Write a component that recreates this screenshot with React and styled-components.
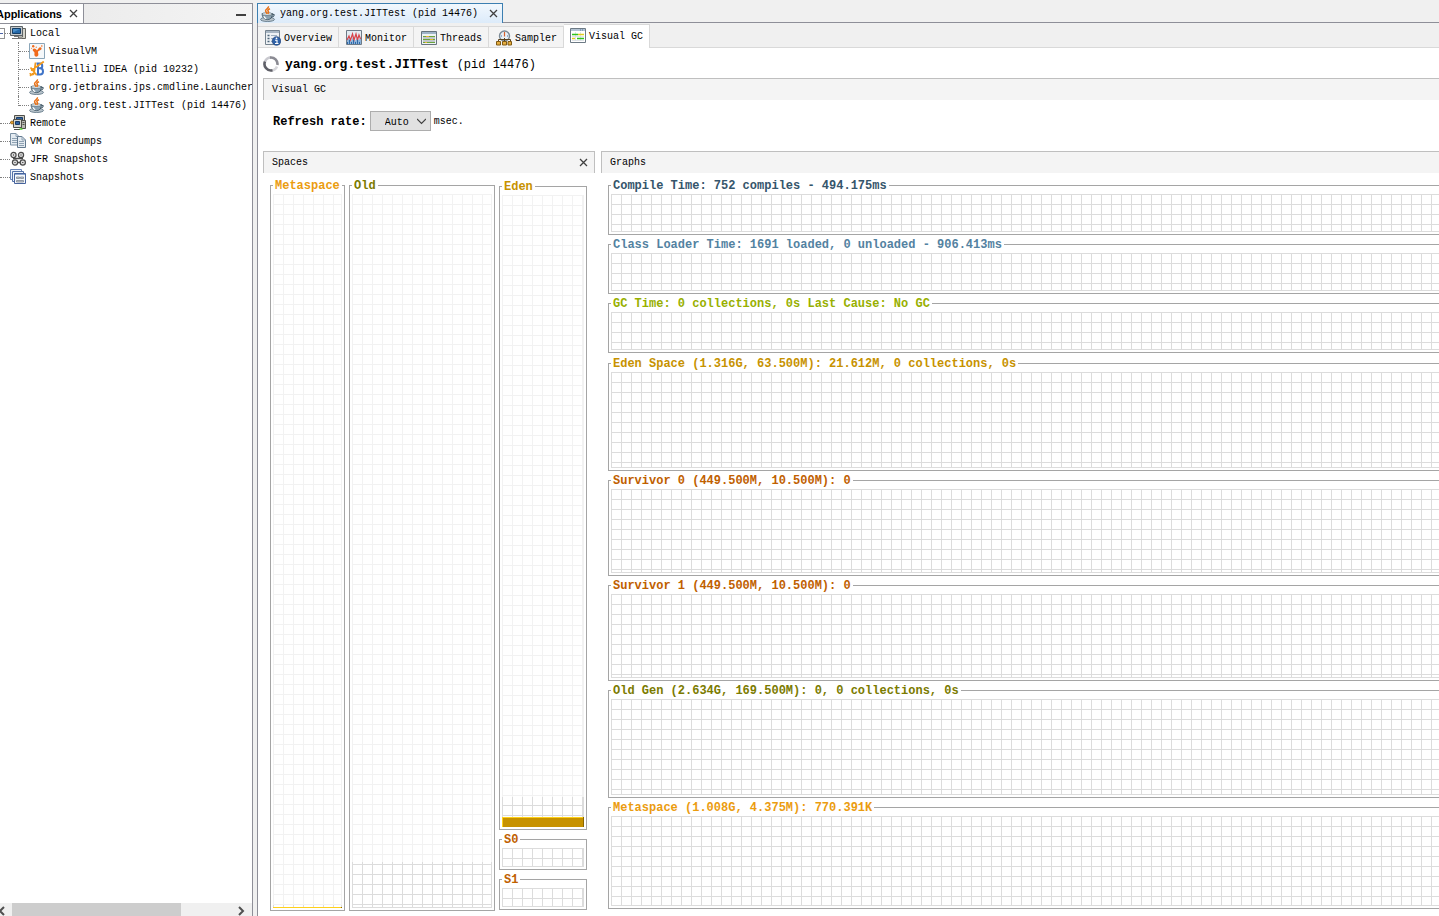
import React, { useState } from "react";
import styled, { createGlobalStyle, ThemeProvider } from "styled-components";

const theme = {
  chrome: "#f0f0f0",
  header: "#f4f4f4",
  edge: "#8e8f98",
  rule: "#bfbfbf",
  soft: "#d9d9d9",
  frame: "#a5a5a5",
  grid: "#dcdcdc",
};

const GlobalStyle = createGlobalStyle`
  * {
    box-sizing: border-box;
  }

  body {
    margin: 0;
    overflow: hidden;
    background: #f0f0f0;
    color: #000;
    font: 10px/18px "Liberation Mono", "Courier New", monospace;
  }

  button,
  select {
    margin: 0;
    padding: 0;
    border: 0;
    background: none;
    color: inherit;
    font: inherit;
  }

  svg {
    display: block;
    flex: none;
  }
`;

const Window = styled.div`
  display: flex;
  gap: 4px;
  height: 100vh;
  min-height: 600px;
  padding-top: 3px;
  background: ${(props) => props.theme.chrome};
`;

const Sidebar = styled.aside`
  display: flex;
  flex-direction: column;
  flex: none;
  width: 253px;
  overflow: hidden;
  background: #fff;
  border-top: 1px solid ${(props) => props.theme.edge};
  border-right: 1px solid ${(props) => props.theme.edge};
`;

const SidebarHeader = styled.header`
  display: flex;
  justify-content: space-between;
  height: 20px;
  background: linear-gradient(to right, #e8e8e8, #f4f4f4);
  border-bottom: 1px solid ${(props) => props.theme.edge};
`;

const SidebarTab = styled.div`
  display: flex;
  align-items: center;
  justify-content: flex-end;
  gap: 6px;
  width: 84px;
  padding-right: 4px;
  overflow: hidden;
  background: #fff;
  border-right: 1px solid ${(props) => props.theme.edge};
  font: bold 11px/18px "Liberation Sans", Arial, sans-serif;
`;

const IconButton = styled.button`
  display: flex;
  align-items: center;
  justify-content: center;
  width: ${(props) => props.$width || 11}px;
  flex: none;
`;

const Label = styled.span`
  padding-top: 2px;
`;

const Tree = styled.ul`
  flex: 1;
  margin: 0;
  padding: 0;
  list-style: none;
  white-space: nowrap;
  overflow: hidden;
`;

const Branch = styled.ul`
  margin: 0 0 0 18px;
  padding: 0;
  list-style: none;
`;

const Leaf = styled.li`
  /* dotted trunk, which stops half way down the last row */
  &::before {
    content: "";
    float: left;
    height: ${(props) => (props.$last ? 10 : 18)}px;
    border-left: 1px dotted #808080;
  }
`;

const Node = styled.div`
  display: flex;
  align-items: center;
  gap: 4px;
  height: 18px;
`;

const Twig = styled.span`
  flex: none;
  width: ${(props) => props.$width}px;
  margin-right: -4px;
  border-top: 1px dotted #808080;
`;

const Expander = styled.button`
  width: 5px;
  height: 11px;
  margin-right: -4px;
  background: linear-gradient(#4b63a7, #4b63a7) 0 4px / 3px 1px no-repeat #fff;
  border: 1px solid #919191;
  border-left: 0;
`;

const ScrollBar = styled.div`
  display: flex;
  align-items: center;
  height: 13px;
  background: ${(props) => props.theme.chrome};
`;

const Thumb = styled.div`
  width: 169px;
  height: 100%;
  margin-right: auto;
  background: #cdcdcd;
`;

const Main = styled.main`
  display: flex;
  flex-direction: column;
  flex: 1;
  min-width: 0;
`;

const DocumentTabs = styled.div`
  display: flex;
  height: 20px;

  &::after {
    content: "";
    flex: 1;
    border-bottom: 1px solid ${(props) => props.theme.edge};
  }
`;

const DocumentTab = styled.div`
  display: flex;
  align-items: center;
  gap: 4px;
  width: 246px;
  padding: 0 3px 0 2px;
  background: linear-gradient(#f2f8fd, #dcebfa);
  border: 1px solid #3c7fb1;
  border-bottom: 0;

  button {
    margin-left: auto;
  }
`;

const Document = styled.section`
  display: flex;
  flex-direction: column;
  flex: 1;
  min-height: 0;
  background: #fff;
  border-left: 1px solid ${(props) => props.theme.edge};
`;

const ViewTabs = styled.div`
  display: flex;
  align-items: flex-end;
  height: 25px;
  padding-top: 1px;
  background: ${(props) => props.theme.chrome};

  &::after {
    content: "";
    flex: 1;
    border-bottom: 1px solid ${(props) => props.theme.soft};
  }
`;

const ViewTab = styled.button`
  display: flex;
  align-items: center;
  gap: 3px;
  height: ${(props) => (props.$active ? 24 : 22)}px;
  padding: ${(props) => (props.$active ? "0 6px 1px" : "2px 6px 0 7px")};
  background: ${(props) => (props.$active ? "#fff" : props.theme.header)};
  border: 0 solid ${(props) => props.theme.soft};
  border-width: ${(props) => (props.$active ? "1px 1px 0 0" : "1px 1px 1px 0")};
`;

const Title = styled.h1`
  display: flex;
  align-items: center;
  gap: 6px;
  height: 30px;
  margin: 0;
  padding: 2px 0 0 5px;
  font-size: 13px;

  small {
    font-weight: normal;
    font-size: 12px;
  }
`;

const PanelHeader = styled.h2`
  display: flex;
  align-items: center;
  justify-content: space-between;
  height: 22px;
  margin: 0;
  padding: 0 5px 0 8px;
  background: ${(props) => props.theme.header};
  border: 1px solid ${(props) => props.theme.rule};
  border-bottom: 0;
  border-right-width: ${(props) => (props.$open ? 0 : 1)}px;
  font-size: 10px;
  font-weight: normal;
`;

const Body = styled.div`
  display: flex;
  flex-direction: column;
  flex: 1;
  min-height: 0;
  padding: 0 0 5px 5px;
`;

const Options = styled.form`
  display: flex;
  align-items: center;
  gap: 3px;
  height: 51px;
  padding: 0 0 9px 10px;
`;

const OptionLabel = styled.label`
  padding-top: 2px;
  font-size: 12px;
  font-weight: bold;
`;

const SelectBox = styled.div`
  display: grid;
  align-items: center;
  width: 61px;
  height: 20px;
  background: #e1e1e1;
  border: 1px solid #adadad;

  select,
  svg {
    grid-area: 1 / 1;
  }

  select {
    height: 18px;
    padding: 2px 0 0 14px;
    appearance: none;
  }

  svg {
    justify-self: end;
    margin-right: 4px;
    pointer-events: none;
  }
`;

const Panels = styled.div`
  display: flex;
  gap: 6px;
  flex: 1;
  min-height: 0;
`;

const Panel = styled.section`
  display: flex;
  flex-direction: column;
  flex: ${(props) => (props.$width ? "none" : 1)};
  width: ${(props) => (props.$width ? `${props.$width}px` : "auto")};
  min-width: 0;
`;

const Spaces = styled.div`
  display: grid;
  grid-template-columns: 75fr 146fr 88fr;
  gap: 4px;
  flex: 1;
  min-height: 0;
  padding: 6px 8px 0 7px;
`;

const YoungGen = styled.div`
  display: flex;
  flex-direction: column;
  gap: 3px;
  padding: 1px 0;
`;

const Graphs = styled.div`
  display: flex;
  flex-direction: column;
  gap: 4px;
  flex: 1;
  min-height: 0;
  padding: 6px 0 2px 7px;
`;

const GraphGroup = styled.div`
  display: flex;
  flex-direction: column;
  gap: 3px;
  flex: ${(props) => (props.$fill ? "1 1 0" : "none")};
  min-height: 0;
`;

const Frame = styled.fieldset`
  display: flex;
  flex-direction: column;
  flex: ${(props) => (props.$grow ? `${props.$grow} 1 0` : "none")};
  height: ${(props) => (props.$height ? `${props.$height}px` : "auto")};
  min-width: 0;
  min-height: 0;
  margin: 0;
  padding: 2px ${(props) => (props.$open ? 0 : 2)}px 2px 2px;
  border: 1px solid ${(props) => props.theme.frame};
  border-right-width: ${(props) => (props.$open ? 0 : 1)}px;
`;

const Legend = styled.legend`
  padding: 2px 2px 0;
  color: ${(props) => props.$color};
  font-size: 12px;
  font-weight: bold;
  line-height: 11px;
  white-space: nowrap;
`;

const Canvas = styled.div`
  display: flex;
  flex-direction: column;
  flex: 1;
  min-height: 0;
  background-image: linear-gradient(
      to right,
      ${(props) => props.theme.grid} 1px,
      transparent 1px
    ),
    linear-gradient(${(props) => props.theme.grid} 1px, transparent 1px);
  background-size: 10px 10px;
  border-bottom: 1px solid ${(props) => props.theme.grid};
  border-right: ${(props) => (props.$open ? 0 : 1)}px solid
    ${(props) => props.theme.grid};
`;

const Reserved = styled.div`
  flex: ${(props) => props.$share} 1 0;
  margin-right: -1px;
  background: rgba(255, 255, 255, 0.62);
`;

const Committed = styled.div`
  flex: ${(props) => props.$share} 1 0;
`;

const Used = styled.div`
  flex: ${(props) => props.$share} 1 0;
  min-height: 1px;
  margin: 0 -1px -1px 0;
  background: #c79200;
  box-shadow: inset -1px 0 #8b6600, inset 1px 1px #ffd11a;
`;

/* ---------- icons ---------- */

const Icon = ({ children, size = 16 }) => (
  <svg width={size} height={size} viewBox={`0 0 ${size} ${size}`} fill="none" aria-hidden="true">
    {children}
  </svg>
);

const CloseIcon = () => (
  <Icon size={9}>
    <path d="M1 1l7 7M8 1L1 8" stroke="#404040" strokeWidth="1.3" />
  </Icon>
);

const JavaIcon = () => (
  <Icon>
    <ellipse cx="7.5" cy="13.400" rx="7" ry="2.100" fill="#b9c4cc" stroke="#587080" strokeWidth=".8" />
    <path d="M2 7.500h10.500c0 3.500-1.500 6-5 6.200C4 13.500 2 11 2 7.500z" fill="#8ba1b0" stroke="#3f5563" strokeWidth=".8" />
    <ellipse cx="7.200" cy="8" rx="5" ry="1.300" fill="#e8eef1" stroke="#3f5563" strokeWidth=".6" />
    <path d="M12.300 8.300c2.500-.6 3 2.200-1.300 3.200" stroke="#3f5563" strokeWidth="1.100" />
    <path d="M3.800 10.300c.5 1.400 1.500 2 2.500 2.300" stroke="#fff" strokeWidth="1.200" />
    <path d="M8.300.3c1 2-3.600 2.900-2.600 4.900.3.900 1 1.500 1.200 2.600M10 2.700C7.600 3.700 7.500 4.600 8.300 5.500c.6.800.2 1.600-.5 2.300" stroke="#e8731a" strokeWidth="1.500" />
  </Icon>
);

const HostIcon = () => (
  <Icon>
    <path d="M12.500 3.500h3v10h-7v-1.500h4z" fill="#d4d4cc" stroke="#64645f" />
    <path d="M.5 1.500h12v9H.5z" fill="#c3c8cb" stroke="#5b6266" />
    <path d="M2.500 3.500h8v5h-8z" fill="#2468a8" stroke="#153e66" />
    <path d="M3 4h7L3 7.500z" fill="#4c8fc8" />
    <path d="M4 11.500h5M2 13.500h10" stroke="#777" />
  </Icon>
);

const VisualVmIcon = () => (
  <Icon>
    <path d="M.5.5h15v15H.5z" fill="#f5f8fa" stroke="#8aa5b8" />
    <path d="M4 6c1.300-1.200 3-.3 3.800 1.200C9 6.600 9.300 5 10.500 4.400c1.500-.7 2.800.8 1.800 2-.8 1-2.600.9-3.200 2.200-.4 1 .6 2.200.2 3.600-.4 1.500-2.600 2-3.600.6-.8-1.200.2-2.600-.4-3.600C4.700 8.400 2.800 7.400 4 6z" fill="#f06a1c" />
    <circle cx="4.200" cy="3.300" r="1.200" fill="#f06a1c" />
    <circle cx="7.300" cy="4.300" r=".8" fill="#f59455" />
    <circle cx="12.800" cy="3" r=".8" fill="#f06a1c" />
    <circle cx="2.600" cy="5.300" r=".6" fill="#f59455" />
  </Icon>
);

const IdeaIcon = () => (
  <Icon>
    <path d="M9 2.500v11M7.500 2.500H11c3 0 3 4.800 0 4.800H9M11 7.300c4 0 4 6.200 0 6.200H7.500" stroke="#3f74c8" strokeWidth="2" />
    <path d="M6.500 1.500l-1.300 10c-.4 2.600-3.700 3-4.200.6M1.500 6.500l6 7.500M2 9.500C6 7 10 4 14.800.5M1 14.800l3-2.500" stroke="#f29a1f" strokeWidth="1.700" />
  </Icon>
);

const RemoteIcon = () => (
  <Icon>
    <path d="M4.500.5h10v8h-10z" fill="#c9c9c2" stroke="#4f4f4a" />
    <path d="M6.500 2.500h6v3h-6z" fill="#2d62a3" stroke="#1b3c66" />
    <path d="M11.500 5.500h4v8h-4z" fill="#b9b9b2" stroke="#4f4f4a" />
    <path d="M3.500 4.500h8v8h-8z" fill="#d6d6cf" stroke="#4f4f4a" />
    <path d="M5.500 6.500h4v3h-4z" fill="#2d62a3" stroke="#1b3c66" />
    <path d="M12.500 7.500h2M12.500 9.500h2M4 14.500h6" stroke="#4f4f4a" />
    <path d="M9.500 14h3" stroke="#4fd22c" strokeWidth="1.500" />
    <path d="M0 7.500h4" stroke="#555" />
    <circle cx="2" cy="7.500" r="1.500" fill="#e4a02c" stroke="#8a5a10" strokeWidth=".7" />
  </Icon>
);

const CoredumpIcon = () => (
  <Icon>
    <path d="M.5.5H6l3 3v8.500H.5z" fill="#e4ebf1" stroke="#7d92a5" />
    <path d="M6 .5v3h3M2 5.500h5M2 7.500h5M2 9.500h5" stroke="#8fa2b3" />
    <path d="M7.500 3.500H12l3.500 3.500v7.500h-8z" fill="#e4ebf1" stroke="#62798e" />
    <path d="M12 3.500V7h3.500M9 8.500h5M9 10.500h5M9 12.500h5" stroke="#8fa2b3" />
  </Icon>
);

const JfrIcon = () => (
  <Icon>
    <g fill="#ddd" stroke="#4a4a4a" strokeWidth="1.200">
      <circle cx="3.500" cy="4" r="2.600" />
      <circle cx="11" cy="4" r="2.600" />
      <circle cx="5" cy="11.500" r="2.600" />
      <circle cx="12.800" cy="11.500" r="2.600" />
    </g>
    <path d="M3 7.500h10M7.500 11.500h3" stroke="#4a4a4a" strokeWidth="1.600" />
    <path d="M3 4h1M10.500 4h1M4.500 11.500h1M12.300 11.500h1" stroke="#222" strokeWidth="1.200" />
  </Icon>
);

const SnapshotIcon = () => (
  <Icon>
    <path d="M.5.5h11v10H.5z" fill="#eef3fa" stroke="#6b86b8" />
    <path d="M2.500 2.500h11v10h-11z" fill="#eef3fa" stroke="#5572a8" />
    <path d="M4.500 4.500h11v10h-11z" fill="#f5f8fc" stroke="#46639c" />
    <path d="M5 5.500h10" stroke="#8fa7d0" />
    <path d="M6.500 8h3v1.500h-3zM10.500 8h3v1.500h-3zM6.500 11.500h7v1.500h-7z" fill="#c4c9d0" stroke="#7f8894" strokeWidth=".8" />
  </Icon>
);

const OverviewIcon = () => (
  <Icon>
    <path d="M.5.500h14v14H.5z" fill="#eef2f5" stroke="#75838f" />
    <path d="M1 2h13" stroke="#a8b6c3" strokeWidth="2" />
    <path d="M2.500 5.500h2M2.500 8.500h2M2.500 11.500h2" stroke="#4c6478" strokeWidth="1.500" />
    <path d="M6 5.500h6M6 8.500h4M6 11.500h2" stroke="#9fb0be" />
    <circle cx="11.500" cy="11" r="4.300" fill="#2f62a8" stroke="#1b3f7a" strokeWidth=".7" />
    <path d="M10 10.300h2v3.200M10 13.500h3.500" stroke="#fff" strokeWidth="1.100" />
    <circle cx="11.500" cy="8.300" r=".9" fill="#fff" />
  </Icon>
);

const MonitorIcon = () => (
  <Icon>
    <path d="M.5.5h15v14H.5z" fill="#e3ebf2" stroke="#6e7b88" />
    <path d="M1 14v-4l2-2 2 3 2-4 2 4 2-3 2 2 2-3v7z" fill="#8db4da" />
    <path d="M1 10l2-4 1.500 4 2-6 1.500 6 2-6 1.500 6 1.500-5 1.500 4" stroke="#d8434a" strokeWidth="1.200" />
    <path d="M1.500 14v-2M3.500 14v-4M5.500 14v-2M7.500 14v-4M9.500 14v-2M11.500 14v-4M13.500 14v-2" stroke="#2f69a8" />
  </Icon>
);

const ThreadsIcon = () => (
  <Icon>
    <path d="M.5 1.500h15v13H.5z" fill="#eef2f4" stroke="#66737e" />
    <path d="M1 3h14" stroke="#9fb4c8" strokeWidth="2" />
    <path d="M2 6.500h12M2 9.500h12M2 12.500h12" stroke="#69a53c" strokeWidth="1.200" />
    <path d="M5 6.500h3M9 9.500h3M4 12.500h2" stroke="#e8b130" strokeWidth="1.200" />
    <path d="M2 8h12M2 11h12" stroke="#59636b" strokeWidth=".6" />
  </Icon>
);

const SamplerIcon = () => (
  <Icon>
    <circle cx="8.500" cy="6" r="5" fill="#e8f0f6" stroke="#7b8a96" strokeWidth="1.400" />
    <path d="M8.500 2v4.500" stroke="#d8602c" strokeWidth="1.200" />
    <path d="M5 6h1M11 6h1" stroke="#4577a8" />
    <path d="M2.500 12V9.500h12V12M8.500 8v4" stroke="#5a4320" />
    <path d="M.5 11.500h4v3.500h-4zM6.500 11.500h4v3.500h-4zM12 11.500h3.500v3.500H12z" fill="#e5ad3f" stroke="#805a14" />
  </Icon>
);

const VisualGcIcon = () => (
  <Icon>
    <path d="M.5.5h15v14H.5z" fill="#fff" stroke="#6d7a85" />
    <path d="M1 2h14" stroke="#b4c4d4" strokeWidth="2" />
    <path d="M10 2h4" stroke="#5577a0" strokeDasharray="1 1" />
    <path d="M2 8.500h12M2 12.500h12M5.500 4v9M10.500 4v9" stroke="#d7dde2" strokeWidth=".8" />
    <path d="M2 6.500h6M7 10.500h7" stroke="#2fc41a" strokeWidth="1.600" />
    <path d="M8 6.500h6M2 10.500h3" stroke="#e3cf1d" strokeWidth="1.600" />
  </Icon>
);

const BusyIcon = () => (
  <Icon>
    <path d="M2 5.500A6.500 6.500 0 0 1 8 1.500" stroke="#c9c9cf" strokeWidth="2.600" />
    <path d="M7 1.600A6.500 6.500 0 0 1 14.400 9" stroke="#8b8b93" strokeWidth="2.600" />
    <path d="M14 10.500A6.500 6.500 0 0 1 8 14.500" stroke="#d6d6da" strokeWidth="2.600" />
    <path d="M9.500 14.300A6.500 6.500 0 0 1 2 5.500" stroke="#5f6068" strokeWidth="2.600" />
  </Icon>
);

/* ---------- data ---------- */

const processes = [
  { name: "VisualVM", icon: <VisualVmIcon /> },
  { name: "IntelliJ IDEA (pid 10232)", icon: <IdeaIcon /> },
  { name: "org.jetbrains.jps.cmdline.Launcher", icon: <JavaIcon /> },
  { name: "yang.org.test.JITTest (pid 14476)", icon: <JavaIcon /> },
];

const roots = [
  { name: "Remote", icon: <RemoteIcon /> },
  { name: "VM Coredumps", icon: <CoredumpIcon /> },
  { name: "JFR Snapshots", icon: <JfrIcon /> },
  { name: "Snapshots", icon: <SnapshotIcon /> },
];

const views = [
  { name: "Overview", icon: <OverviewIcon /> },
  { name: "Monitor", icon: <MonitorIcon /> },
  { name: "Threads", icon: <ThreadsIcon /> },
  { name: "Sampler", icon: <SamplerIcon /> },
  { name: "Visual GC", icon: <VisualGcIcon /> },
];

// sizes in MB
const spaces = {
  metaspace: { name: "Metaspace", color: "#eb9c0f", max: 1032, committed: 4.375, used: 0.752 },
  old: { name: "Old", color: "#7b7b00", max: 2697, committed: 169.5, used: 0 },
  eden: { name: "Eden", color: "#c79200", max: 1347.5, committed: 63.5, used: 21.612 },
  s0: { name: "S0", color: "#c06000", max: 10.5, committed: 10.5, used: 0 },
  s1: { name: "S1", color: "#c06000", max: 10.5, committed: 10.5, used: 0 },
};

const timers = [
  { title: "Compile Time: 752 compiles - 494.175ms", color: "#35556b" },
  { title: "Class Loader Time: 1691 loaded, 0 unloaded - 906.413ms", color: "#5382a1" },
  { title: "GC Time: 0 collections, 0s Last Cause: No GC", color: "#98b000" },
];

const pools = [
  { title: "Eden Space (1.316G, 63.500M): 21.612M, 0 collections, 0s", color: "#c79200", grow: 114 },
  { title: "Survivor 0 (449.500M, 10.500M): 0", color: "#c06000", grow: 102 },
  { title: "Survivor 1 (449.500M, 10.500M): 0", color: "#c06000", grow: 102 },
  { title: "Old Gen (2.634G, 169.500M): 0, 0 collections, 0s", color: "#7b7b00", grow: 114 },
  { title: "Metaspace (1.008G, 4.375M): 770.391K", color: "#eb9c0f", grow: 108 },
];

const Space = ({ space, grow, height }) => {
  const { name, color, max, committed, used } = space;

  return (
    <Frame $grow={grow} $height={height}>
      <Legend $color={color}>{name}</Legend>
      <Canvas>
        {max > committed && <Reserved $share={max - committed} />}
        <Committed $share={committed - used} />
        {used > 0 && <Used $share={used} />}
      </Canvas>
    </Frame>
  );
};

const Graph = ({ graph, height }) => (
  <Frame $open $grow={graph.grow} $height={height}>
    <Legend $color={graph.color}>{graph.title}</Legend>
    <Canvas $open />
  </Frame>
);

const Applications = () => (
  <Sidebar>
    <SidebarHeader>
      <SidebarTab>
        Applications
        <IconButton aria-label="Close">
          <CloseIcon />
        </IconButton>
      </SidebarTab>
      <IconButton aria-label="Minimize" $width={22}>
        <Icon size={10}>
          <path d="M0 6h10" stroke="#404040" strokeWidth="2" />
        </Icon>
      </IconButton>
    </SidebarHeader>
    <Tree>
      <li>
        <Node>
          <Expander aria-label="Collapse" />
          <Twig $width={5} />
          <HostIcon />
          <Label>Local</Label>
        </Node>
        <Branch>
          {processes.map((item, i) => (
            <Leaf key={item.name} $last={i === processes.length - 1}>
              <Node>
                <Twig $width={10} />
                {item.icon}
                <Label>{item.name}</Label>
              </Node>
            </Leaf>
          ))}
        </Branch>
      </li>
      {roots.map((item) => (
        <li key={item.name}>
          <Node>
            <Twig $width={10} />
            {item.icon}
            <Label>{item.name}</Label>
          </Node>
        </li>
      ))}
    </Tree>
    <ScrollBar>
      <IconButton aria-label="Scroll left" $width={12}>
        <Icon size={12}>
          <path d="M4 3L0 7l4 4" stroke="#505050" strokeWidth="2" />
        </Icon>
      </IconButton>
      <Thumb />
      <IconButton aria-label="Scroll right" $width={22}>
        <Icon size={12}>
          <path d="M4 3l4 4-4 4" stroke="#505050" strokeWidth="2" />
        </Icon>
      </IconButton>
    </ScrollBar>
  </Sidebar>
);

const App = () => {
  const [view, setView] = useState("Visual GC");

  return (
    <ThemeProvider theme={theme}>
      <GlobalStyle />
      <Window>
        <Applications />
        <Main>
          <DocumentTabs>
            <DocumentTab>
              <JavaIcon />
              yang.org.test.JITTest (pid 14476)
              <IconButton aria-label="Close tab">
                <CloseIcon />
              </IconButton>
            </DocumentTab>
          </DocumentTabs>
          <Document>
            <ViewTabs role="tablist">
              {views.map((item) => (
                <ViewTab
                  key={item.name}
                  role="tab"
                  aria-selected={view === item.name}
                  $active={view === item.name}
                  onClick={() => setView(item.name)}
                >
                  {item.icon}
                  <Label>{item.name}</Label>
                </ViewTab>
              ))}
            </ViewTabs>
            <Title>
              <BusyIcon />
              <Label>
                yang.org.test.JITTest <small>(pid 14476)</small>
              </Label>
            </Title>
            <Body>
              <PanelHeader $open>Visual GC</PanelHeader>
              <Options>
                <OptionLabel htmlFor="rate">Refresh rate:</OptionLabel>
                <SelectBox>
                  <select id="rate" defaultValue="Auto">
                    <option>Auto</option>
                    <option>100</option>
                    <option>500</option>
                    <option>1000</option>
                  </select>
                  <Icon size={9}>
                    <path d="M0 2l4.500 4.500L9 2" stroke="#404040" strokeWidth="1.200" />
                  </Icon>
                </SelectBox>
                <Label>msec.</Label>
              </Options>
              <Panels>
                <Panel $width={332}>
                  <PanelHeader>
                    Spaces
                    <IconButton aria-label="Close Spaces">
                      <CloseIcon />
                    </IconButton>
                  </PanelHeader>
                  <Spaces>
                    <Space space={spaces.metaspace} />
                    <Space space={spaces.old} />
                    <YoungGen>
                      <Space space={spaces.eden} grow={1} />
                      <Space space={spaces.s0} height={37} />
                      <Space space={spaces.s1} height={37} />
                    </YoungGen>
                  </Spaces>
                </Panel>
                <Panel>
                  <PanelHeader $open>Graphs</PanelHeader>
                  <Graphs>
                    <GraphGroup>
                      {timers.map((graph) => (
                        <Graph key={graph.title} graph={graph} height={56} />
                      ))}
                    </GraphGroup>
                    <GraphGroup $fill>
                      {pools.map((graph) => (
                        <Graph key={graph.title} graph={graph} />
                      ))}
                    </GraphGroup>
                  </Graphs>
                </Panel>
              </Panels>
            </Body>
          </Document>
        </Main>
      </Window>
    </ThemeProvider>
  );
};

export default App;
